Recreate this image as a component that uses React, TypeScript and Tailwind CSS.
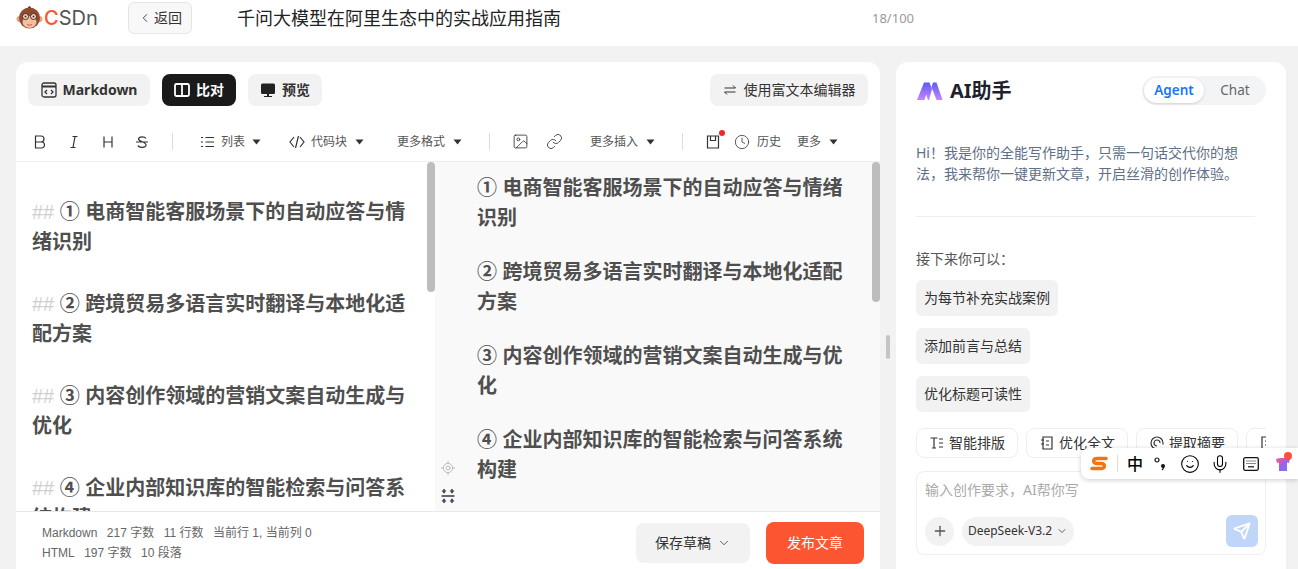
import React from 'react';
import { ChevronLeft, ChevronDown, Clock, Image, Link, Plus, LocateFixed, Mic, Smile, Send } from 'lucide-react';

const headings = [
  '① 电商智能客服场景下的自动应答与情绪识别',
  '② 跨境贸易多语言实时翻译与本地化适配方案',
  '③ 内容创作领域的营销文案自动生成与优化',
  '④ 企业内部知识库的智能检索与问答系统构建',
];

const Caret = () => (
  <svg className="w-[9px] h-[6px] shrink-0" viewBox="0 0 9 6">
    <path d="M0.5 0.5h8L4.5 5.5z" fill="#333" />
  </svg>
);

const Divider = () => <div className="w-px h-[17px] bg-[#dcdcdc] shrink-0" />;

const MonkeyLogo = () => (
  <svg className="w-[27px] h-[24px] shrink-0" viewBox="0 0 27 24">
    <circle cx="3.5" cy="13" r="3" fill="#e8a27c" />
    <circle cx="23.5" cy="13" r="3" fill="#e8a27c" />
    <circle cx="13.5" cy="12" r="10.5" fill="#8f4a32" />
    <path d="M12 1l2-1 1 2h-3z" fill="#6b3323" />
    <ellipse cx="13.5" cy="16" rx="7" ry="6" fill="#f2bfa0" />
    <circle cx="9.5" cy="10.5" r="3" fill="#f6d8c4" stroke="#4a2a20" strokeWidth="1" />
    <circle cx="17.5" cy="10.5" r="3" fill="#f6d8c4" stroke="#4a2a20" strokeWidth="1" />
    <circle cx="9.5" cy="10.5" r="1" fill="#4a2a20" />
    <circle cx="17.5" cy="10.5" r="1" fill="#4a2a20" />
    <path d="M11 18.5q2.500 1.500 5 0" stroke="#c0694a" strokeWidth="1" fill="none" />
  </svg>
);

const AiLogo = () => (
  <svg className="w-[27px] h-[20px]" viewBox="0 0 27 20">
    <defs>
      <linearGradient id="aiLogo" x1="0" y1="0" x2="0" y2="1">
        <stop offset="0" stopColor="#5a5cf5" />
        <stop offset="1" stopColor="#c884ff" />
      </linearGradient>
    </defs>
    <path d="M8 1.500h5.500L16 8l-3 11H1z" fill="url(#aiLogo)" />
    <path d="M17 1.500h3.500l6 17.500h-6L15.500 6z" fill="url(#aiLogo)" />
    <path d="M8.500 19l1.700-5.500L12 19z" fill="#fff" />
  </svg>
);

const TabButton = ({ active, width, icon, label }: { active?: boolean; width: string; icon: React.ReactNode; label: string }) => (
  <button className={`h-8 rounded-lg flex items-center justify-center gap-[6px] font-bold text-sm ${width} ${active ? 'bg-[#1a1a1a] text-white' : 'bg-[#f2f2f2] text-[#333]'}`}>
    {icon}
    {label}
  </button>
);

const ActionButton = ({ icon, label, width }: { icon: React.ReactNode; label?: string; width: string }) => (
  <div className={`h-[30px] shrink-0 rounded-lg border border-[#efefef] bg-white flex items-center gap-1 pl-3 text-sm text-[#333] overflow-hidden ${width}`}>
    {icon}
    {label}
  </div>
);

const LineIcon = ({ d }: { d: string }) => (
  <svg className="w-4 h-4 shrink-0" viewBox="0 0 16 16" fill="none" stroke="#333" strokeWidth="1.200">
    <path d={d} />
  </svg>
);

export default function App() {
  return (
    <div className="relative w-[1298px] h-[569px] overflow-hidden bg-[#f2f2f2] flex flex-col font-['Noto_Sans','Noto_Sans_CJK_SC',sans-serif]">
      {/* Header */}
      <header className="h-[46px] shrink-0 bg-white flex items-start">
        <div className="ml-[16px] mt-[5px] w-[80px] flex items-center gap-px">
          <MonkeyLogo />
          <span className="text-[20px] leading-[26px] font-['Inter',sans-serif] whitespace-nowrap">
            <span className="text-[#fc5531] font-medium">C</span>
            <span className="text-[#555]">SD</span>
            <span className="text-[#555]">n</span>
          </span>
        </div>
        <button className="ml-[32px] mt-[2px] w-16 h-8 rounded-md border border-[#e5e5e5] bg-[#f8f8f8] flex items-center justify-center gap-[2px] text-sm text-[#333]">
          <ChevronLeft className="w-[14px] h-[14px]" strokeWidth={1.500} />
          返回
        </button>
        <div className="ml-[45px] mt-[4px] w-[635px] text-lg leading-[28px] text-[#222]">千问大模型在阿里生态中的实战应用指南</div>
        <div className="mt-[8px] text-[13px] leading-[20px] text-[#999]">18/100</div>
      </header>

      <main className="flex-1 min-h-0 flex gap-4 pl-4 pr-3 pt-4">
        {/* Editor */}
        <section className="w-[864px] shrink-0 bg-white rounded-t-xl flex flex-col overflow-hidden">
          <div className="h-[44px] shrink-0 flex items-end justify-between px-3">
            <div className="flex gap-3">
              <TabButton
                width="w-[122px]"
                label="Markdown"
                icon={
                  <svg className="w-4 h-4" viewBox="0 0 16 16" fill="none" stroke="#333" strokeWidth="1.300">
                    <rect x="1" y="1" width="14" height="14" rx="2" />
                    <path d="M1 4.500h14" strokeWidth="2" />
                    <path d="M6 8l-2 2 2 2M10 8l2 2-2 2" />
                  </svg>
                }
              />
              <TabButton
                active
                width="w-[74px]"
                label="比对"
                icon={
                  <svg className="w-4 h-4" viewBox="0 0 16 16" fill="none" stroke="#fff" strokeWidth="1.800">
                    <rect x="1" y="2" width="14" height="12" rx="1.500" />
                    <path d="M8 2v12" />
                  </svg>
                }
              />
              <TabButton
                width="w-[74px]"
                label="预览"
                icon={
                  <svg className="w-4 h-4" viewBox="0 0 16 16" fill="#222">
                    <rect x="1" y="1.500" width="14" height="10.500" rx="1.500" />
                    <path d="M7 12h2v2h3v1H4v-1h3z" />
                  </svg>
                }
              />
            </div>
            <button className="w-[158px] h-8 rounded-lg bg-[#f2f2f2] flex items-center justify-center gap-[7px] text-sm text-[#333]">
              <svg className="w-[14px] h-[14px]" viewBox="0 0 14 14" fill="none" stroke="#333" strokeWidth="1">
                <path d="M1.500 5h11L10 2.500M12.500 9h-11L4 11.500" />
              </svg>
              使用富文本编辑器
            </button>
          </div>

          {/* Toolbar */}
          <div className="h-[56px] shrink-0 border-b border-[#eeeeee] flex items-center pt-[16px] text-xs text-[#555]">
            <div className="ml-[16px] flex items-center gap-[18px] text-[#333]">
              <LineIcon d="M3.500 2h5.500a3 3 0 0 1 0 6H3.500zM3.500 8h6a3 3 0 0 1 0 6h-6z" />
              <LineIcon d="M6.500 2.500h5M4.500 13.500h5M9 2.500L7 13.500" />
              <LineIcon d="M4 2.500v11M12 2.500v11M4 8h8" />
              <LineIcon d="M12 4.500C11 2.500 5 2 4.500 5c-.4 2.500 7.500 2.500 7.500 6 0 3-7 3-8 .5M2 8h12" />
            </div>
            <div className="ml-[22px]"><Divider /></div>
            <div className="ml-[27px] flex items-center gap-[5px]">
              <LineIcon d="M1 3.500h2M1 8h2M1 12.500h2M5.500 3.500H14M5.500 8H14M5.500 12.500H14" />
              列表
              <span className="ml-[2px]"><Caret /></span>
            </div>
            <div className="ml-[28px] flex items-center gap-[6px]">
              <LineIcon d="M5 3L1 8l4 5M11 3l4 5-4 5M9.500 2l-3 12" />
              代码块
              <span className="ml-[2px]"><Caret /></span>
            </div>
            <div className="ml-[33px] flex items-center gap-[8px]">
              更多格式
              <Caret />
            </div>
            <div className="ml-[27px]"><Divider /></div>
            <Image className="ml-[22px] w-[17px] h-[17px] text-[#333]" strokeWidth={1.200} />
            <Link className="ml-[17px] w-[17px] h-[17px] text-[#333]" strokeWidth={1.200} />
            <div className="ml-[27px] flex items-center gap-[8px]">
              更多插入
              <Caret />
            </div>
            <div className="ml-[27px]"><Divider /></div>
            <div className="relative ml-[22px]">
              <LineIcon d="M2.500 2h11v12h-11zM5.500 2v4.500h5V2" />
              <span className="absolute -top-[4px] -right-[4px] w-[6px] h-[6px] rounded-full bg-[#f0282d]" />
            </div>
            <Clock className="ml-[13px] w-4 h-4 text-[#333]" strokeWidth={1.200} />
            <span className="ml-[7px]">历史</span>
            <span className="ml-[16px]">更多</span>
            <span className="ml-[8px]"><Caret /></span>
          </div>

          {/* Split view */}
          <div className="flex-1 min-h-0 flex font-['Liberation_Sans','Noto_Sans_CJK_SC',sans-serif]">
            <div className="w-[419px] shrink-0 pt-[35px] pl-[16px] pr-[22px] overflow-hidden">
              {headings.map((text) => (
                <p key={text} className="mb-[32px] text-xl leading-[30px] font-bold text-[#4f4f4f]">
                  <span className="font-normal text-[#cfcfcf]">##</span> {text}
                </p>
              ))}
            </div>
            <div className="flex-1 bg-[#f9f9f9] pt-[11px] pl-[42px] pr-[30px] overflow-hidden">
              {headings.map((text) => (
                <p key={text} className="mb-[24px] text-xl leading-[30px] font-bold text-[#4f4f4f]">
                  {text}
                </p>
              ))}
            </div>
          </div>

          {/* Footer */}
          <footer className="h-[58px] shrink-0 border-t border-[#e8e8e8] flex items-center justify-between pl-[26px] pr-[16px]">
            <div className="font-['Liberation_Sans','Noto_Sans_CJK_SC',sans-serif] text-xs leading-[20px] text-[#666] pt-[4px]">
              <div className="flex gap-[9.500px]">
                <span>Markdown</span>
                <span>217 字数</span>
                <span>11 行数</span>
                <span>当前行 1, 当前列 0</span>
              </div>
              <div className="flex gap-[9.500px]">
                <span>HTML</span>
                <span>197 字数</span>
                <span>10 段落</span>
              </div>
            </div>
            <div className="flex items-center gap-4 pt-[4px]">
              <button className="w-[114px] h-10 rounded-lg bg-[#f2f2f2] flex items-center justify-center gap-[6px] text-sm text-[#333]">
                保存草稿
                <ChevronDown className="w-[14px] h-[14px] text-[#445]" strokeWidth={1.500} />
              </button>
              <button className="w-[98px] h-[42px] rounded-lg bg-[#fc5531] text-sm text-white">发布文章</button>
            </div>
          </footer>
        </section>

        {/* AI panel */}
        <aside className="w-[390px] shrink-0 bg-white rounded-t-xl px-5 flex flex-col overflow-hidden">
          <div className="h-[43px] shrink-0 flex items-end justify-between">
            <div className="flex items-center gap-[7px] h-[29px]">
              <AiLogo />
              <span className="text-xl font-bold text-[#1f1f2e]">AI助手</span>
            </div>
            <div className="w-[124px] h-[29px] rounded-full bg-[#f3f4f6] flex items-center pl-[2px] text-[13.500px]">
              <span className="w-[60px] h-[25px] rounded-full bg-white shadow-[0_1px_3px_rgba(0,0,0,0.15)] flex items-center justify-center font-semibold text-[#1a73ff]">Agent</span>
              <span className="flex-1 text-center text-[#666]">Chat</span>
            </div>
          </div>
          <p className="mt-[37px] w-[330px] text-sm leading-[21px] text-[#5f6f86]">
            Hi！我是你的全能写作助手，只需一句话交代你的想法，我来帮你一键更新文章，开启丝滑的创作体验。
          </p>
          <div className="mt-[32px] w-[339px] h-px bg-[#efefef] shrink-0" />
          <div className="mt-[32px] text-sm leading-[20px] text-[#555]">接下来你可以：</div>
          <div className="mt-[11px] flex flex-col items-start gap-3">
            <div className="h-9 px-2 rounded-md bg-[#f2f2f2] flex items-center text-sm text-[#333]">为每节补充实战案例</div>
            <div className="h-9 px-2 rounded-md bg-[#f2f2f2] flex items-center text-sm text-[#333]">添加前言与总结</div>
            <div className="h-9 px-2 rounded-md bg-[#f2f2f2] flex items-center text-sm text-[#333]">优化标题可读性</div>
          </div>
          <div className="mt-[16px] w-[350px] flex gap-2 overflow-hidden">
            <ActionButton width="w-[102px]" label="智能排版" icon={<LineIcon d="M1.500 3h7M5 3v10M3 13h4M10 4h4M10 8h4M10 12h4" />} />
            <ActionButton width="w-[102px]" label="优化全文" icon={<LineIcon d="M4 2h9v12H4zM2 5h3M2 9h3M7 6h3M7 10h3" />} />
            <ActionButton width="w-[102px]" label="提取摘要" icon={<LineIcon d="M8 14a6 6 0 1 1 6-6v1.500M8 11a3 3 0 1 1 3-3" />} />
            <ActionButton width="w-[60px]" icon={<LineIcon d="M3 2h10v12H3zM6 6h4M6 10h4" />} />
          </div>
          <div className="mt-[13px] w-[350px] h-[84px] shrink-0 rounded-lg border border-[#efefef] bg-white pl-[8px] pr-[7px] flex flex-col">
            <div className="mt-[8px] text-sm leading-[20px] text-[#aaaaaa]">输入创作要求，AI帮你写</div>
            <div className="mt-[15px] flex items-center justify-between">
              <div className="flex items-center gap-2">
                <div className="w-[29px] h-[29px] rounded-full bg-[#f2f2f2] flex items-center justify-center">
                  <Plus className="w-4 h-4 text-[#555]" strokeWidth={2} />
                </div>
                <div className="h-[29px] w-[112px] rounded-full bg-[#f2f2f2] flex items-center justify-center gap-[4px] text-xs text-[#333]">
                  DeepSeek-V3.2
                  <ChevronDown className="w-3 h-3" strokeWidth={1.500} />
                </div>
              </div>
              <div className="w-8 h-8 rounded-md bg-[#bfd6f8] flex items-center justify-center">
                <Send className="w-[18px] h-[18px] text-white" strokeWidth={2.500} />
              </div>
            </div>
          </div>
        </aside>
      </main>

      {/* Editor scrollbars */}
      <div className="absolute left-[427px] top-[162px] w-2 h-[130px] rounded-full bg-[#bdbdbd]" />
      <div className="absolute left-[872px] top-[162px] w-2 h-[140px] rounded-full bg-[#bdbdbd]" />
      <div className="absolute left-[886px] top-[335px] w-1 h-[24px] rounded-full bg-[#c4c4c4]" />

      {/* Preview floating tools */}
      <div className="absolute left-[440px] top-[460px] flex flex-col items-center gap-[12px]">
        <LocateFixed className="w-4 h-4 text-[#bbbbbb]" strokeWidth={1.500} />
        <svg className="w-4 h-4" viewBox="0 0 16 16" fill="#3f4654">
          <rect x="1.500" y="7.200" width="13" height="1.600" />
          <path d="M3.200 1h1.600v1.500H6.500L4 5.800 1.500 2.500h1.700zM11.200 1h1.600v1.500h1.700L12 5.800 9.500 2.500h1.700z" />
          <path d="M3.200 15h1.600v-1.500H6.500L4 10.200 1.500 13.500h1.700zM11.200 15h1.600v-1.500h1.700L12 10.200 9.500 13.500h1.700z" />
        </svg>
      </div>

      {/* Input method bar */}
      <div className="absolute left-[1081px] top-[448px] w-[217px] h-[31px] bg-white rounded-l-lg shadow-[0_1px_5px_rgba(0,0,0,0.2)] flex items-center">
        <svg className="ml-[9px] w-[18px] h-[15px] shrink-0" viewBox="0 0 18 15" fill="none" stroke="#f5730f" strokeWidth="3.500" strokeLinecap="round">
          <path d="M16 2.500H7C3 2.500 2.500 7 6 7.500h6c3.500.5 3 5-1 5H2" />
        </svg>
        <div className="ml-[9px] w-px h-[17px] bg-[#dddddd] shrink-0" />
        <span className="ml-[9px] text-base font-medium text-black">中</span>
        <svg className="ml-[11px] w-3 h-4 shrink-0" viewBox="0 0 12 16" fill="none">
          <circle cx="3" cy="4" r="2" stroke="#111" strokeWidth="1.200" />
          <circle cx="9" cy="10" r="2" fill="#111" />
          <path d="M9.500 11q0 2-1.500 3" stroke="#111" strokeWidth="1.200" />
        </svg>
        <Smile className="ml-[14px] w-5 h-5 text-black shrink-0" strokeWidth={1.300} />
        <Mic className="ml-[10px] w-5 h-5 text-black shrink-0" strokeWidth={1.300} />
        <svg className="ml-[13px] w-4 h-4 shrink-0" viewBox="0 0 16 16" fill="none" stroke="#111">
          <rect x="0.700" y="1.700" width="14.600" height="12.600" rx="1.500" strokeWidth="1.300" />
          <path d="M3.500 5h9M3.500 7.500h9" strokeWidth="1.200" strokeDasharray="1 1" />
          <path d="M5 10.800h6" strokeWidth="1.200" />
        </svg>
        <div className="relative ml-[17px] shrink-0">
          <svg className="w-[14px] h-[14px]" viewBox="0 0 14 14">
            <defs>
              <linearGradient id="shirt" x1="0" y1="0" x2="1" y2="1">
                <stop offset="0" stopColor="#ff5d73" />
                <stop offset="0.500" stopColor="#a35de8" />
                <stop offset="1" stopColor="#4f8dff" />
              </linearGradient>
            </defs>
            <path d="M0 2l4-1h6l4 1-1 4-2-.500V14H3V5.500L1 6z" fill="url(#shirt)" />
          </svg>
          <span className="absolute -top-[5px] left-[8px] w-2 h-2 rounded-full bg-[#ff4d3d]" />
        </div>
      </div>
    </div>
  );
}
